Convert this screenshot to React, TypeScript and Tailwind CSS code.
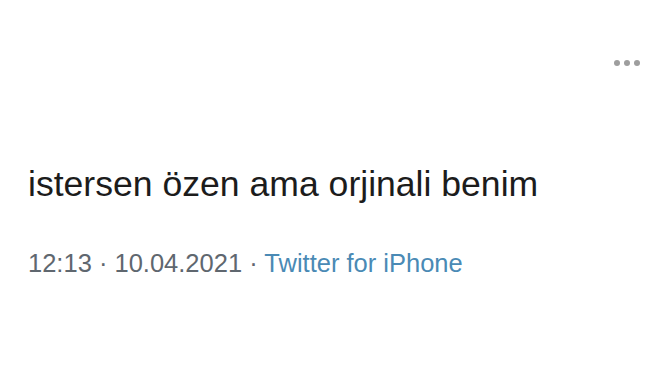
export default function App() {
  return (
    <div className="w-[672px] h-[378px] bg-white relative overflow-hidden" style={{ fontFamily: '"Liberation Sans", Arial, sans-serif' }}>
      <div className="absolute left-[614px] top-[60px] flex gap-[4px]">
        <span className="w-[6px] h-[6px] rounded-full bg-[#9e9e9e]" />
        <span className="w-[6px] h-[6px] rounded-full bg-[#9e9e9e]" />
        <span className="w-[6px] h-[6px] rounded-full bg-[#9e9e9e]" />
      </div>
      <div className="pl-[28px] pt-[164px] flex flex-col">
        <p className="text-[35.6px] leading-[40px] text-[#1c1c1c]">istersen özen ama orjinali benim</p>
        <p className="mt-[44px] text-[25.5px] leading-[30px] text-[#5f676f]">
          12:13 · 10.04.2021 · <span className="text-[#4a8ab5]">Twitter for iPhone</span>
        </p>
      </div>
    </div>
  );
}
